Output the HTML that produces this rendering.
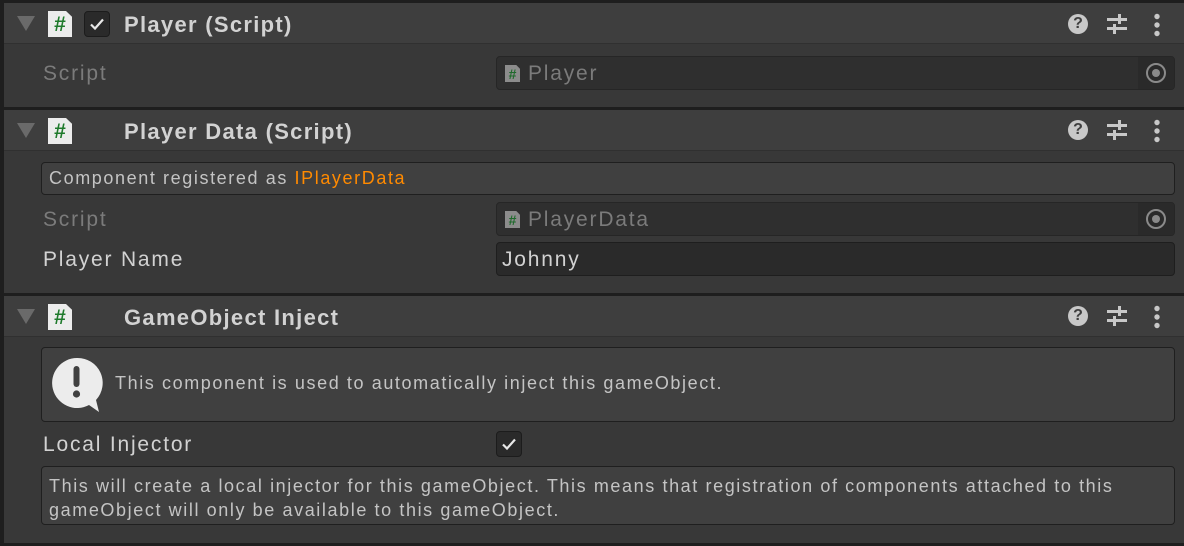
<!DOCTYPE html>
<html><head><style>
*{margin:0;padding:0;box-sizing:border-box}
body{width:1184px;height:546px;background:#383838;position:relative;overflow:hidden;font-family:"Liberation Sans",sans-serif;color:#c4c4c4}
.a{position:absolute}
.sep{position:absolute;left:0;width:1184px;height:3px;background:#1e1e1e}
.hdr{position:absolute;left:4px;width:1180px;height:41px;background:#3e3e3e;border-bottom:1px solid #303030}
.tri{position:absolute;left:13px;top:13px;width:0;height:0;border-left:9px solid transparent;border-right:9px solid transparent;border-top:15px solid #6a6a6a}
.ic{position:absolute;left:44px;top:8px;width:24px;height:26px;background:#ececec;clip-path:polygon(0 0,75% 0,100% 22%,100% 100%,0 100%);color:#1f7a2c;font-weight:bold;font-size:21px;text-align:center;line-height:27px}
.title{position:absolute;left:120px;top:9px;font-size:22px;font-weight:bold;color:#d2d2d2;letter-spacing:1.3px}
.lbl{position:absolute;left:43px;font-size:21px;color:#d2d2d2;letter-spacing:1.8px}
.dim{color:#7b7b7b}
.fld{position:absolute;left:496px;width:679px;height:34px;border-radius:4px;background:#2f2f2f;border:1px solid #262626}
.fld .tgt{position:absolute;right:0;top:0;width:36px;height:32px;background:#2a2a2a;border-radius:0 4px 4px 0}
.fld .tgt:after{content:"";position:absolute;left:8px;top:6px;width:16px;height:16px;border:2px solid #8a8a8a;border-radius:50%}
.fld .tgt:before{content:"";position:absolute;left:14px;top:12px;width:8px;height:8px;background:#8a8a8a;border-radius:50%;z-index:1}
.mini{position:absolute;left:8px;top:8px;width:15px;height:17px;background:#8c8c8c;clip-path:polygon(0 0,75% 0,100% 22%,100% 100%,0 100%);color:#1f6a2c;font-size:14px;font-weight:bold;text-align:center;line-height:18px}
.ftxt{position:absolute;left:31px;top:5px;font-size:21px;color:#7b7b7b;letter-spacing:1.8px}
.help{position:absolute;left:41px;width:1134px;background:#404040;border:1px solid #1f1f1f;border-radius:4px;font-size:18px;color:#c4c4c4;letter-spacing:1.6px}
.cb{position:absolute;width:26px;height:26px;background:#2a2a2a;border:1px solid #1c1c1c;border-radius:4px}
.cb svg{position:absolute;left:4px;top:4px}
</style></head><body>
<div class="sep" style="top:0"></div>
<div class="a" style="left:0;top:0;width:4px;height:546px;background:#1e1e1e"></div>

<div class="hdr" style="top:3px">
  <div class="tri"></div><div class="ic">#</div>
  <div class="cb" style="left:80px;top:8px"><svg width="16" height="16" viewBox="0 0 16 16"><path d="M2 8.5 L6 12.5 L14 3.5" stroke="#e8e8e8" stroke-width="2.2" fill="none"/></svg></div>
  <div class="title">Player (Script)</div>
</div>
<div class="lbl dim" style="top:62px">Script</div>
<div class="fld" style="top:56px"><div class="mini">#</div><div class="ftxt">Player</div><div class="tgt"></div></div>

<div class="sep" style="top:107px"></div>
<div class="hdr" style="top:110px">
  <div class="tri"></div><div class="ic">#</div>
  <div class="title">Player Data (Script)</div>
</div>
<div class="help" style="top:162px;height:33px;padding:5px 0 0 7px">Component registered as <span style="color:#ff8a00">IPlayerData</span></div>
<div class="lbl dim" style="top:208px">Script</div>
<div class="fld" style="top:202px"><div class="mini">#</div><div class="ftxt">PlayerData</div><div class="tgt"></div></div>
<div class="lbl" style="top:248px">Player Name</div>
<div class="fld" style="top:242px;background:#2a2a2a;border-color:#1e1e1e"><div class="ftxt" style="left:5px;color:#d2d2d2">Johnny</div></div>

<div class="sep" style="top:293px"></div>
<div class="hdr" style="top:296px">
  <div class="tri"></div><div class="ic">#</div>
  <div class="title">GameObject Inject</div>
</div>
<div class="help" style="top:347px;height:75px">
  <svg class="a" style="left:9px;top:8px" width="56" height="58" viewBox="0 0 56 58"><path d="M26 2 A25 25 0 1 0 38 49 L48 56 L45 44 A25 25 0 0 0 26 2Z" fill="#ececec"/><rect x="22.5" y="10" width="6" height="21" rx="3" fill="#404040"/><circle cx="25.5" cy="38" r="3.6" fill="#404040"/></svg>
  <div class="a" style="left:73px;top:25px">This component is used to automatically inject this gameObject.</div>
</div>
<div class="lbl" style="top:433px">Local Injector</div>
<div class="cb" style="left:496px;top:431px"><svg width="16" height="16" viewBox="0 0 16 16"><path d="M2 8.5 L6 12.5 L14 3.5" stroke="#e8e8e8" stroke-width="2.2" fill="none"/></svg></div>
<div class="help" style="top:466px;height:59px;padding:7px 0 0 7px;line-height:24px">This will create a local injector for this gameObject. This means that registration of components attached to this<br>gameObject will only be available to this gameObject.</div>
<div class="sep" style="top:543px"></div>

<div class="a" style="left:1068px;top:14px;width:20px;height:20px;border-radius:50%;background:#c8c8c8;color:#3e3e3e;font-weight:bold;font-size:16px;text-align:center;line-height:20px">?</div>
<div class="a" style="left:1068px;top:120px;width:20px;height:20px;border-radius:50%;background:#c8c8c8;color:#3e3e3e;font-weight:bold;font-size:16px;text-align:center;line-height:20px">?</div>
<div class="a" style="left:1068px;top:306px;width:20px;height:20px;border-radius:50%;background:#c8c8c8;color:#3e3e3e;font-weight:bold;font-size:16px;text-align:center;line-height:20px">?</div>
<svg class="a" style="left:1106px;top:14px" width="22" height="22" viewBox="0 0 22 22"><g fill="#c8c8c8"><rect x="1" y="4" width="20" height="3"/><rect x="12" y="0" width="3" height="10"/><rect x="1" y="13" width="20" height="3"/><rect x="7" y="10" width="3" height="10"/></g></svg>
<svg class="a" style="left:1106px;top:120px" width="22" height="22" viewBox="0 0 22 22"><g fill="#c8c8c8"><rect x="1" y="4" width="20" height="3"/><rect x="12" y="0" width="3" height="10"/><rect x="1" y="13" width="20" height="3"/><rect x="7" y="10" width="3" height="10"/></g></svg>
<svg class="a" style="left:1106px;top:306px" width="22" height="22" viewBox="0 0 22 22"><g fill="#c8c8c8"><rect x="1" y="4" width="20" height="3"/><rect x="12" y="0" width="3" height="10"/><rect x="1" y="13" width="20" height="3"/><rect x="7" y="10" width="3" height="10"/></g></svg>
<svg class="a" style="left:1152px;top:13px" width="10" height="24" viewBox="0 0 10 24"><g fill="#c8c8c8"><circle cx="5" cy="3.5" r="2.7"/><circle cx="5" cy="12" r="2.7"/><circle cx="5" cy="20.5" r="2.7"/></g></svg>
<svg class="a" style="left:1152px;top:119px" width="10" height="24" viewBox="0 0 10 24"><g fill="#c8c8c8"><circle cx="5" cy="3.5" r="2.7"/><circle cx="5" cy="12" r="2.7"/><circle cx="5" cy="20.5" r="2.7"/></g></svg>
<svg class="a" style="left:1152px;top:305px" width="10" height="24" viewBox="0 0 10 24"><g fill="#c8c8c8"><circle cx="5" cy="3.5" r="2.7"/><circle cx="5" cy="12" r="2.7"/><circle cx="5" cy="20.5" r="2.7"/></g></svg>
</body></html>
